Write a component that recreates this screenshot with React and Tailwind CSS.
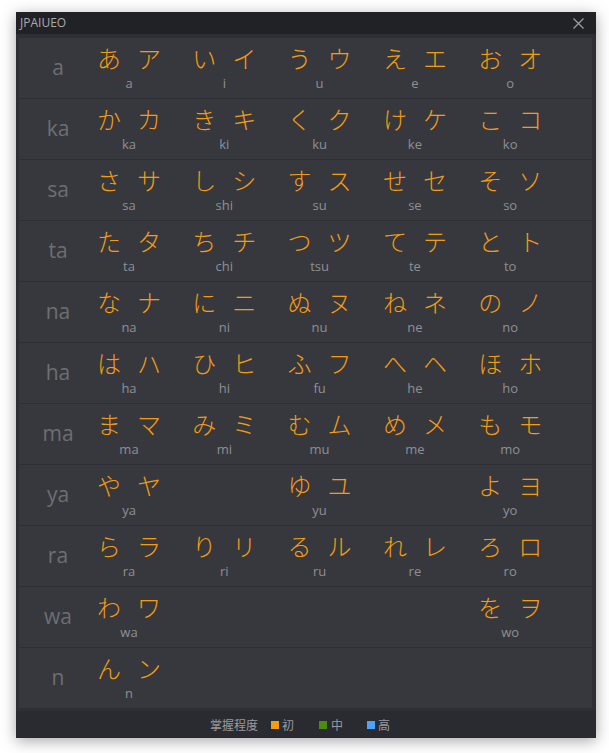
import React from "react";

const rows = [
  ["a", [["あ", "ア", "a"], ["い", "イ", "i"], ["う", "ウ", "u"], ["え", "エ", "e"], ["お", "オ", "o"]]],
  ["ka", [["か", "カ", "ka"], ["き", "キ", "ki"], ["く", "ク", "ku"], ["け", "ケ", "ke"], ["こ", "コ", "ko"]]],
  ["sa", [["さ", "サ", "sa"], ["し", "シ", "shi"], ["す", "ス", "su"], ["せ", "セ", "se"], ["そ", "ソ", "so"]]],
  ["ta", [["た", "タ", "ta"], ["ち", "チ", "chi"], ["つ", "ツ", "tsu"], ["て", "テ", "te"], ["と", "ト", "to"]]],
  ["na", [["な", "ナ", "na"], ["に", "ニ", "ni"], ["ぬ", "ヌ", "nu"], ["ね", "ネ", "ne"], ["の", "ノ", "no"]]],
  ["ha", [["は", "ハ", "ha"], ["ひ", "ヒ", "hi"], ["ふ", "フ", "fu"], ["へ", "ヘ", "he"], ["ほ", "ホ", "ho"]]],
  ["ma", [["ま", "マ", "ma"], ["み", "ミ", "mi"], ["む", "ム", "mu"], ["め", "メ", "me"], ["も", "モ", "mo"]]],
  ["ya", [["や", "ヤ", "ya"], null, ["ゆ", "ユ", "yu"], null, ["よ", "ヨ", "yo"]]],
  ["ra", [["ら", "ラ", "ra"], ["り", "リ", "ri"], ["る", "ル", "ru"], ["れ", "レ", "re"], ["ろ", "ロ", "ro"]]],
  ["wa", [["わ", "ワ", "wa"], null, null, null, ["を", "ヲ", "wo"]]],
  ["n", [["ん", "ン", "n"], null, null, null, null]],
];

const Kana = ({ item }) => {
  if (!item) return <div className="w-[95.3px]" />;
  const [hira, kata, romaji] = item;
  return (
    <div className="w-[95.3px] flex">
      <div className="flex flex-col items-center">
        <div className="flex gap-[16px] text-[24px] leading-[24px] font-light text-[#f39c12] font-['Noto_Sans_CJK_JP',sans-serif]">
          <span>{hira}</span>
          <span>{kata}</span>
        </div>
        <div className="mt-[5px] text-[13px] leading-[16px] text-[#8e8f94] font-['Open_Sans',sans-serif]">
          {romaji}
        </div>
      </div>
    </div>
  );
};

export default function App() {
  return (
    <div className="min-h-screen bg-white pt-3 pl-4">
      <div className="w-[580px] h-[726px] flex flex-col bg-[#2e2f34] shadow-[0_3px_14px_rgba(0,0,0,0.35)]">
        {/* Title bar */}
        <div className="h-[22px] bg-[#212226] flex items-center justify-between pl-1 pr-3">
          <span className="text-[12px] text-[#aaabad] font-['Open_Sans',sans-serif]">JPAIUEO</span>
          <svg width="11" height="11" viewBox="0 0 11 11" stroke="#9c9c9e" strokeWidth="1.3">
            <path d="M0.5 0.5 L10.5 10.5 M10.5 0.5 L0.5 10.5" />
          </svg>
        </div>

        {/* Kana table */}
        <div className="flex flex-col gap-px mt-[4px] ml-[3px] mr-[4px]">
          {rows.map(([label, items]) => (
            <div key={label} className="h-[60px] bg-[#37383e] flex">
              <div className="w-[78px] flex items-center justify-center text-[21px] text-[#6d6e73] font-['Open_Sans',sans-serif]">
                {label}
              </div>
              <div className="flex pt-[8px]">
                {items.map((item, i) => (
                  <Kana key={i} item={item} />
                ))}
              </div>
            </div>
          ))}
        </div>

        {/* Footer legend */}
        <div className="mt-[3px] flex-1 bg-[#2a2b30] flex items-center pl-[194px] text-[12px] text-[#9a9a9e] font-['Noto_Sans_CJK_SC',sans-serif]">
          <span>掌握程度</span>
          <span className="ml-[13px] w-[8px] h-[8px] bg-[#f39c12]" />
          <span className="ml-[3px]">初</span>
          <span className="ml-[25px] w-[8px] h-[8px] bg-[#4a8c0f]" />
          <span className="ml-[4px]">中</span>
          <span className="ml-[24px] w-[8px] h-[8px] bg-[#4aa3ff]" />
          <span className="ml-[3px]">高</span>
        </div>
      </div>
    </div>
  );
}
